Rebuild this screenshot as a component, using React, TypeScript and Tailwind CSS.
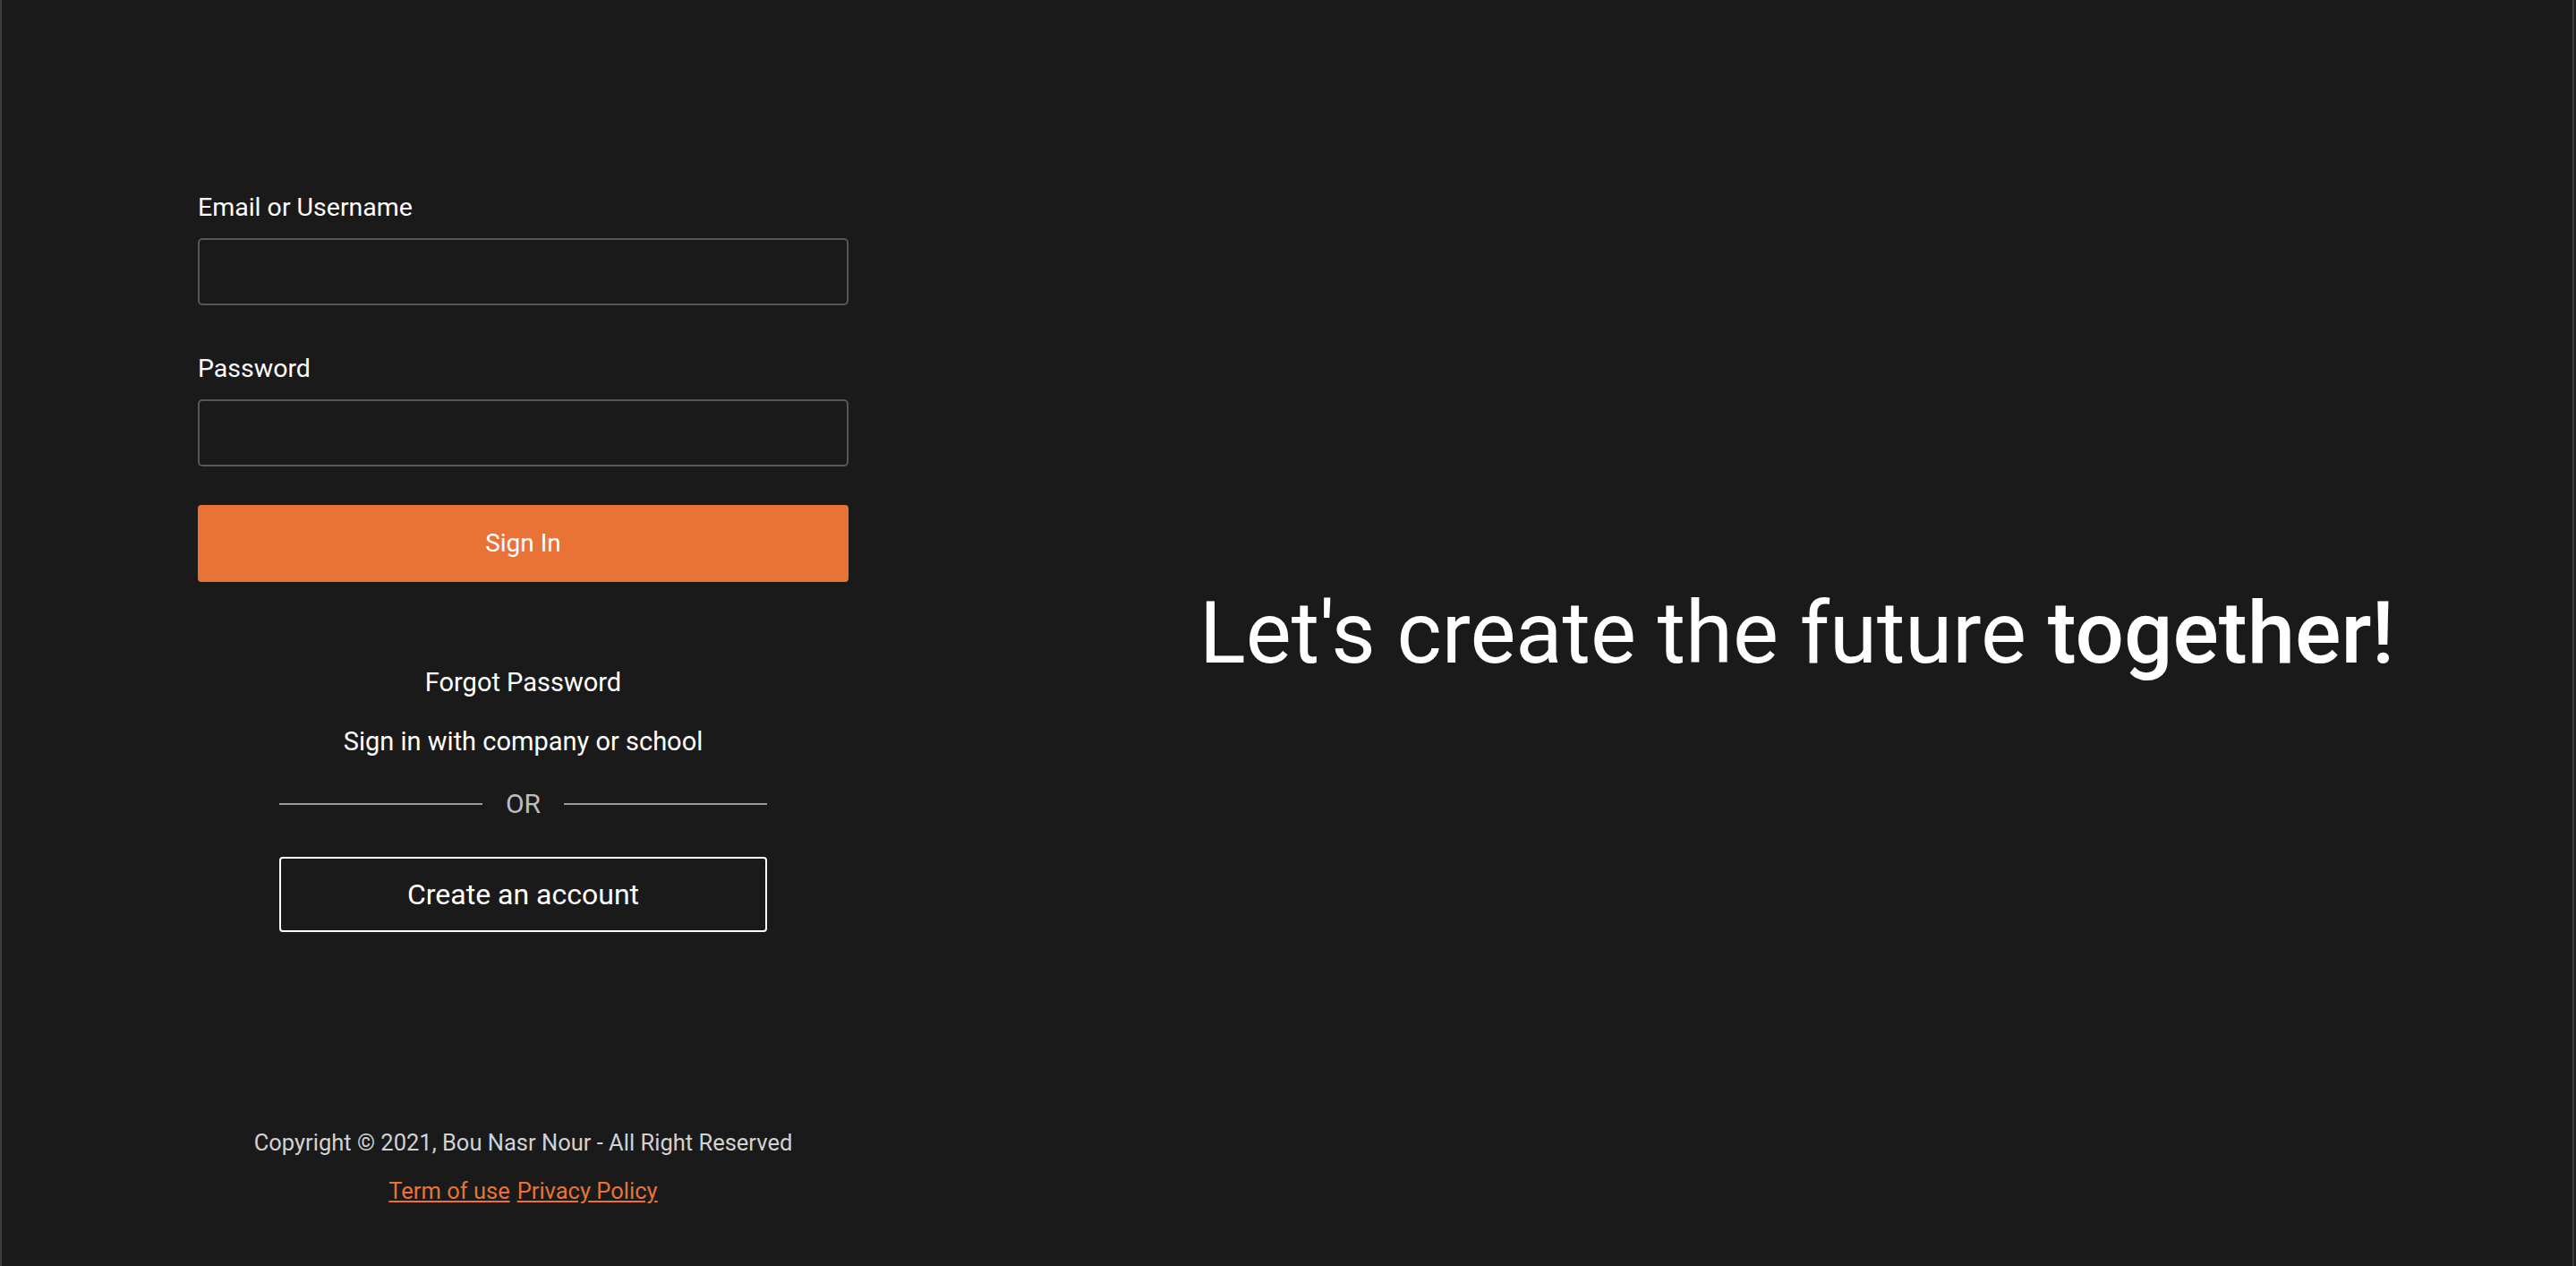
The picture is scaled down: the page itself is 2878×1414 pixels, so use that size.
const Field = ({ label, type, first }: { label: string; type: string; first?: boolean }) => {
    return (
        <div className={first ? "flex flex-col" : "flex flex-col mt-[55px]"}>
            <label className="text-[28.5px] leading-[32px] text-white">{label}</label>
            <input
                type={type}
                className="mt-[18px] h-[75px] w-full rounded-[5px] border-2 border-[#575757] bg-[#1a1a1a] px-4 text-[28px] text-white outline-none"
            />
        </div>
    )
}

const App = () => {
    return (
        <div className="h-[1414px] w-full overflow-hidden bg-[#1a1a1a] font-['Roboto','Liberation_Sans',sans-serif]">
            <div className="flex h-full w-[2876px] border-l-2 border-r-2 border-[#3d3d3d]">

                {/* left side - form */}
                <section className="flex h-full w-[1165px] flex-col items-center">

                    <div className="w-[727px] pt-[216px]">
                        <Field label="Email or Username" type="text" first />
                        <Field label="Password" type="password" />

                        <button className="mt-[43px] h-[86px] w-full rounded-[4px] bg-[#e97236] text-[28px] text-white">
                            Sign In
                        </button>
                    </div>

                    <div className="flex w-[545px] flex-col items-center">
                        <a href="#" className="mt-[96px] text-[29px] leading-[32px] text-white">Forgot Password</a>
                        <a href="#" className="mt-[34px] text-[29px] leading-[32px] text-white">Sign in with company or school</a>

                        <div className="mt-[37px] flex w-full items-center gap-[26px]">
                            <span className="h-[2px] flex-1 bg-[#9a9a9a]"></span>
                            <span className="text-[30px] leading-[34px] text-[#bdbdbd]">OR</span>
                            <span className="h-[2px] flex-1 bg-[#9a9a9a]"></span>
                        </div>

                        <button className="mt-[42px] h-[84px] w-full rounded-[4px] border-2 border-white text-[32px] text-white">
                            Create an account
                        </button>
                    </div>

                    <footer className="mt-auto flex flex-col items-center pb-[70px] text-[25.5px] leading-[28px]">
                        <p className="text-[#d2d2d2]">Copyright © 2021, Bou Nasr Nour - All Right Reserved</p>
                        <p className="mt-[26px] flex gap-[8px] text-[#e97236]">
                            <a href="#" className="underline">Term of use</a>
                            <a href="#" className="underline">Privacy Policy</a>
                        </p>
                    </footer>

                </section>

                {/* right side - slogan */}
                <section className="flex flex-1 items-center justify-center pr-[26px]">
                    <h1 className="text-[96px] text-white">
                        Let's create the future <span className="font-medium">together!</span>
                    </h1>
                </section>

            </div>
        </div>
    )
}

export default App
